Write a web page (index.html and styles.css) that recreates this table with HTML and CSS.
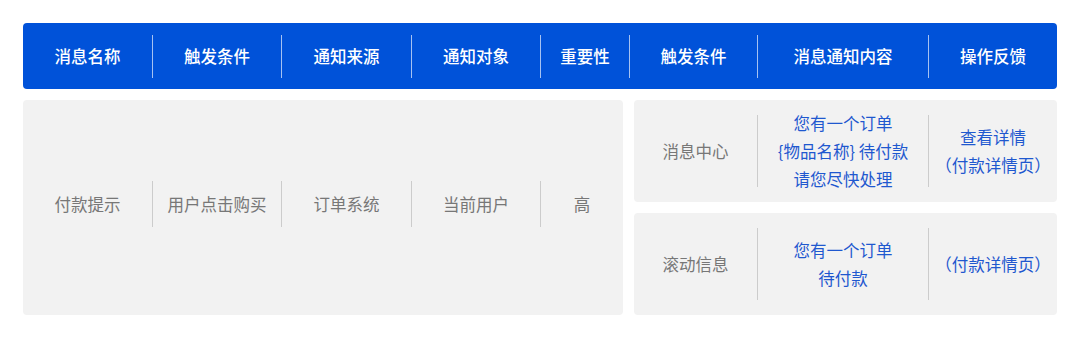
FILE: index.html
```html
<!DOCTYPE html>
<html lang="zh-CN">
<head>
<meta charset="utf-8">
<link rel="stylesheet" href="styles.css">
</head>
<body>
<div class="table">
  <div class="head">
    <div class="hc w129">消息名称</div>
    <div class="hc w129">触发条件</div>
    <div class="hc w130">通知来源</div>
    <div class="hc w129">通知对象</div>
    <div class="hc w89">重要性</div>
    <div class="hc w128">触发条件</div>
    <div class="hc w171">消息通知内容</div>
    <div class="hc wrest">操作反馈</div>
  </div>
  <div class="body">
    <div class="card left">
      <div class="c w129">付款提示</div>
      <div class="c w129">用户点击购买</div>
      <div class="c w130">订单系统</div>
      <div class="c w129">当前用户</div>
      <div class="c wrest">高</div>
    </div>
    <div class="right">
      <div class="card sub">
        <div class="rc w123">消息中心</div>
        <div class="rc w171 blue">您有一个订单<br>{物品名称} 待付款<br>请您尽快处理</div>
        <div class="rc wrest blue">查看详情<br>（付款详情页）</div>
      </div>
      <div class="card sub">
        <div class="rc w123">滚动信息</div>
        <div class="rc w171 blue">您有一个订单<br>待付款</div>
        <div class="rc wrest blue">（付款详情页）</div>
      </div>
    </div>
  </div>
</div>
</body>
</html>
```
FILE: styles.css
```css
html, body {
  margin: 0;
  padding: 0;
  background: #ffffff;
}
body {
  font-family: "Noto Sans CJK SC", "Noto Sans", sans-serif;
}
.table {
  width: 1034px;
  margin: 23px 0 0 23px;
  display: flex;
  flex-direction: column;
  gap: 11px;
}
.head {
  height: 66px;
  background: #0052d9;
  border-radius: 4px;
  display: flex;
  align-items: center;
}
.hc {
  height: 43px;
  display: flex;
  align-items: center;
  justify-content: center;
  color: #ffffff;
  font-size: 16.5px;
  font-weight: 500;
  box-sizing: border-box;
}
.hc + .hc {
  border-left: 1px solid rgba(255, 255, 255, 0.65);
}
.w129 { flex: 0 0 129px; }
.w130 { flex: 0 0 130px; }
.w89 { flex: 0 0 89px; }
.w128 { flex: 0 0 128px; }
.w171 { flex: 0 0 171px; }
.w123 { flex: 0 0 123px; }
.wrest { flex: 1 1 auto; }

.body {
  display: grid;
  grid-template-columns: 600px 1fr;
  gap: 11px;
  height: 215px;
}
.card {
  background: #f2f2f2;
  border-radius: 4px;
  display: flex;
  align-items: center;
}
.left {
  padding-bottom: 7px;
  box-sizing: border-box;
}
.c {
  height: 46px;
  display: flex;
  align-items: center;
  justify-content: center;
  color: #777777;
  font-size: 16.5px;
  box-sizing: border-box;
}
.c + .c {
  border-left: 1px solid #cccccc;
}
.right {
  display: grid;
  grid-template-rows: 1fr 1fr;
  gap: 11px;
}
.rc {
  height: 72px;
  display: flex;
  align-items: center;
  justify-content: center;
  text-align: center;
  color: #777777;
  font-size: 16.5px;
  line-height: 28px;
  box-sizing: border-box;
}
.rc + .rc {
  border-left: 1px solid #cccccc;
}
.rc.w123 { flex: 0 0 123px; }
.blue {
  color: #1f58cf;
}
```
